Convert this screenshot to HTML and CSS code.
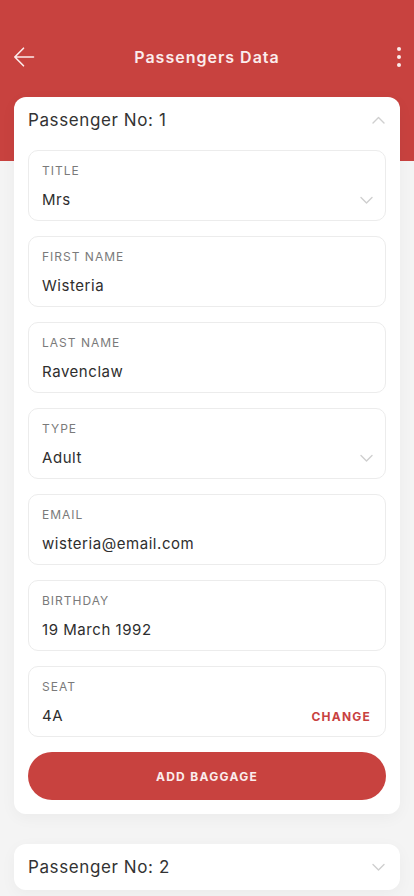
FILE: index.html
```html
<!DOCTYPE html>
<html lang="en">
<head>
<meta charset="utf-8">
<meta name="viewport" content="width=device-width, initial-scale=1">
<title>Passengers Data</title>
<link rel="stylesheet" href="styles.css">
</head>
<body>
<div class="page">
  <header class="toolbar">
    <button class="icon-btn" aria-label="Back">
      <svg width="22" height="22" viewBox="0 0 22 22" fill="none" stroke="currentColor" stroke-width="1.6" stroke-linecap="round" stroke-linejoin="round"><path d="M20.5 11H1.8M10.5 2.2L1.8 11l8.7 8.8"/></svg>
    </button>
    <h1 class="toolbar-title">Passengers Data</h1>
    <button class="icon-btn more" aria-label="More">
      <span class="dot"></span><span class="dot"></span><span class="dot"></span>
    </button>
  </header>

  <main class="content">
    <section class="card">
      <div class="card-head">
        <h2 class="card-title">Passenger No: 1</h2>
        <svg class="chev" width="13" height="8" viewBox="0 0 13 8" fill="none" stroke="currentColor" stroke-width="1.4" stroke-linecap="round" stroke-linejoin="round"><path d="M1 7L6.5 1.5L12 7"/></svg>
      </div>
      <div class="fields">
        <div class="field">
          <div class="label">TITLE</div>
          <div class="row"><span class="value">Mrs</span>
            <svg class="chev" width="13" height="8" viewBox="0 0 13 8" fill="none" stroke="currentColor" stroke-width="1.4" stroke-linecap="round" stroke-linejoin="round"><path d="M1 1.5L6.5 7L12 1.5"/></svg>
          </div>
        </div>
        <div class="field">
          <div class="label">FIRST NAME</div>
          <div class="row"><span class="value">Wisteria</span></div>
        </div>
        <div class="field">
          <div class="label">LAST NAME</div>
          <div class="row"><span class="value">Ravenclaw</span></div>
        </div>
        <div class="field">
          <div class="label">TYPE</div>
          <div class="row"><span class="value">Adult</span>
            <svg class="chev" width="13" height="8" viewBox="0 0 13 8" fill="none" stroke="currentColor" stroke-width="1.4" stroke-linecap="round" stroke-linejoin="round"><path d="M1 1.5L6.5 7L12 1.5"/></svg>
          </div>
        </div>
        <div class="field">
          <div class="label">EMAIL</div>
          <div class="row"><span class="value">wisteria@email.com</span></div>
        </div>
        <div class="field">
          <div class="label">BIRTHDAY</div>
          <div class="row"><span class="value">19 March 1992</span></div>
        </div>
        <div class="field">
          <div class="label">SEAT</div>
          <div class="row"><span class="value">4A</span><span class="link">CHANGE</span></div>
        </div>
        <button class="primary-btn">ADD BAGGAGE</button>
      </div>
    </section>

    <section class="card collapsed">
      <div class="card-head">
        <h2 class="card-title">Passenger No: 2</h2>
        <svg class="chev" width="13" height="8" viewBox="0 0 13 8" fill="none" stroke="currentColor" stroke-width="1.4" stroke-linecap="round" stroke-linejoin="round"><path d="M1 1.5L6.5 7L12 1.5"/></svg>
      </div>
    </section>
  </main>
</div>
</body>
</html>
```

FILE: styles.css
```css
* { box-sizing: border-box; }
html, body { margin: 0; padding: 0; }
body {
  font-family: Inter, "Noto Sans", "Liberation Sans", sans-serif;
  background: #f4f4f4;
  color: #333;
  width: 414px;
  height: 896px;
  overflow: hidden;
}
.page {
  min-height: 896px;
  background: linear-gradient(#c8423f 0, #c8423f 161px, #f4f4f4 161px);
}
.toolbar {
  height: 80px;
  padding: 34px 12px 0 12px;
  display: flex;
  align-items: center;
  justify-content: space-between;
  color: #fbecec;
}
.toolbar > * { align-self: stretch; }
.icon-btn {
  background: none;
  border: 0;
  padding: 0;
  color: #fbecec;
  width: 24px;
  display: flex;
  align-items: center;
  justify-content: center;
}
.more {
  flex-direction: column;
  gap: 4px;
  width: 14px;
  margin-right: -4px;
}
.dot {
  width: 4px;
  height: 4px;
  border-radius: 50%;
  background: #fbecec;
}
.toolbar-title {
  margin: 0;
  font-size: 16px;
  font-weight: 600;
  letter-spacing: 1px;
  display: flex;
  align-items: center;
  padding-right: 14px;
}
.content {
  padding: 17px 14px 0 14px;
  display: flex;
  flex-direction: column;
  gap: 30px;
}
.card {
  background: #fff;
  border-radius: 12px;
  padding: 0 14px 14px 14px;
  box-shadow: 0 4px 16px rgba(0,0,0,0.04);
}
.card.collapsed { padding-bottom: 0; }
.card-head {
  height: 46px;
  display: flex;
  align-items: center;
  justify-content: space-between;
  padding-right: 1px;
}
.card-title {
  margin: 0;
  font-size: 17px;
  font-weight: 400;
  letter-spacing: 0.6px;
  color: #333;
}
.chev { color: #cfcfcf; display: block; }
.fields {
  margin-top: 7px;
  display: flex;
  flex-direction: column;
  gap: 15px;
}
.field {
  height: 71px;
  border: 1px solid #ececec;
  border-radius: 10px;
  padding: 12px 13px 0 13px;
}
.label {
  font-size: 12px;
  line-height: 16px;
  letter-spacing: 1px;
  color: #7a7a7a;
}
.row {
  margin-top: 11px;
  height: 20px;
  display: flex;
  align-items: center;
  justify-content: space-between;
}
.value {
  font-size: 15px;
  line-height: 20px;
  letter-spacing: 0.55px;
  color: #2e2e2e;
}
.row .chev { margin-right: -1px; }
.link {
  font-size: 12px;
  font-weight: 700;
  letter-spacing: 1.2px;
  color: #c8423f;
  margin-right: 1px;
}
.primary-btn {
  height: 48px;
  border: 0;
  border-radius: 24px;
  background: #c8423f;
  color: #fbecec;
  font-family: inherit;
  font-size: 12px;
  font-weight: 700;
  letter-spacing: 1.3px;
}
```
